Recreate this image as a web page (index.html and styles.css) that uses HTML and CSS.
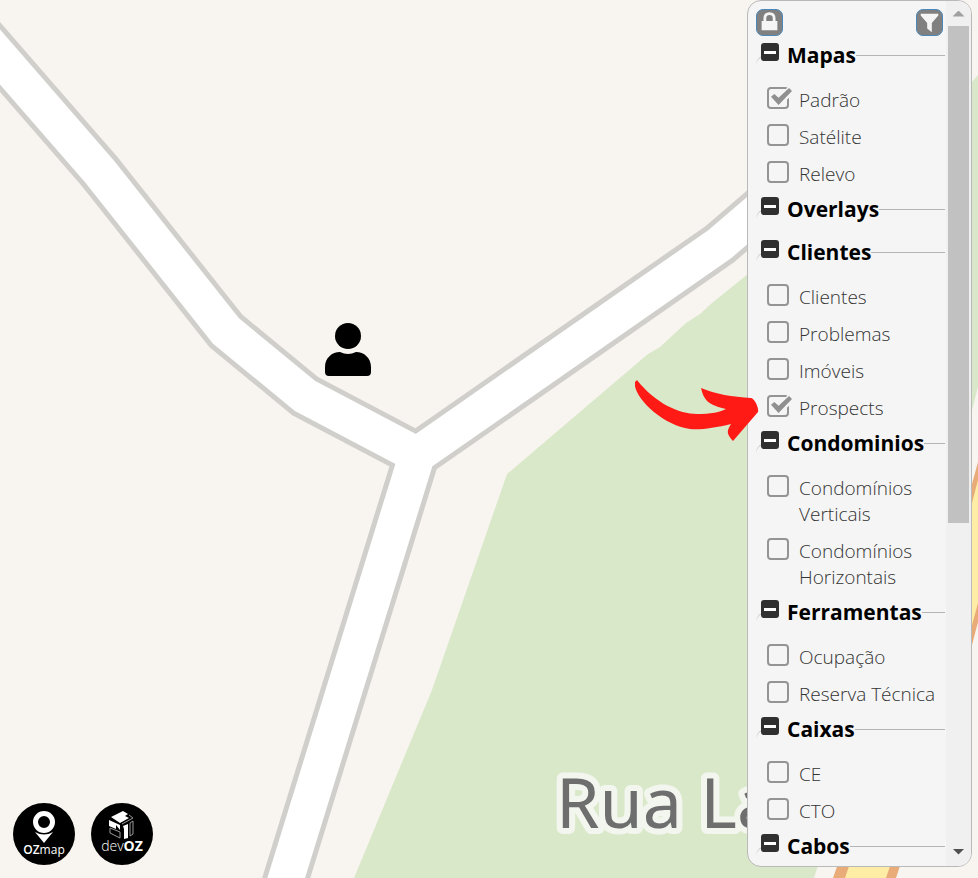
FILE: index.html
```
<!DOCTYPE html>
<html lang="pt-BR">
<head>
  <meta charset="UTF-8">
  <title>OZmap</title>
  <meta name="viewport" content="width=device-width, initial-scale=1.0" />
  <link rel="stylesheet" href="styles.css">
</head>
<body>
  <main class="map">
    <svg class="map-canvas" viewBox="0 0 978 878" preserveAspectRatio="xMaxYMin slice" aria-hidden="true">
      <rect width="978" height="878" fill="#f8f4ef" />
      <!-- park -->
      <path d="M748 274 L712 303 L700 314 L686 323 L660 347 L648 354 L507 474 L432 690 L354 878 H814 L823 850 L900 800 L960 440 L972 410 L978 387 V75 L972 82 L940 120 Z" fill="#d9e8c9" />
      <!-- main avenue -->
      <path d="M833 878 L972 484 L978 462 V622 L972 645 L896 878 Z" fill="#e9ab77" />
      <path d="M845 878 L972 503 L978 480 V603 L972 625 L886 878 Z" fill="#ffeda6" />
      <!-- streets -->
      <g fill="none" stroke-linejoin="miter">
        <path d="M-20 34 L100 172 L226 331 L305 396 L417 455 L720 244 L790 184 M417 455 L280 898" stroke="#d0cfcb" stroke-width="46" />
        <path d="M-20 34 L100 172 L226 331 L305 396 L417 455 L720 244 L790 184 M417 455 L280 898" stroke="#fff" stroke-width="36" />
      </g>
      <text class="street-name" x="556" y="828">Rua La</text>
    </svg>

    <svg class="prospect" viewBox="0 0 46 54" role="img" aria-label="Prospect">
      <circle cx="23" cy="13" r="13" />
      <path d="M0 49 V44 C0 35 7 29 15 29 Q23 33 31 29 C39 29 46 35 46 44 V49 Q46 53 42 53 H4 Q0 53 0 49 Z" />
    </svg>

    <nav class="brands">
      <a class="brand" href="#ozmap" aria-label="OZmap">
        <svg viewBox="0 0 62 62">
          <circle cx="31" cy="31" r="31" />
          <circle cx="31" cy="19" r="8.5" fill="none" stroke="#fff" stroke-width="5" />
          <path d="M22 29 Q31 34 40 29 L31 40 Z" fill="#fff" />
          <text x="31" y="51" class="brand-text"><tspan class="medium">OZ</tspan>map</text>
        </svg>
      </a>
      <a class="brand" href="#devoz" aria-label="devOZ">
        <svg viewBox="0 0 62 62">
          <circle cx="31" cy="31" r="31" />
          <path d="M20 14 L32 8 L37 11 L34 13 L38 15 L29 20 Z M18 17 L29 22 V27 L25 22 V26 L18 23 Z M32 23 L37 21 V35 L33 36 V26 Z" fill="#fff" />
          <path d="M19 25 L29 29 V35 L19 30 Z M39 20 L42 18 V31 L39 33 Z M31 21 L42 15 L38 12" fill="none" stroke="#999" />
          <text x="31" y="48" class="brand-text dev">dev<tspan class="strong">OZ</tspan></text>
        </svg>
      </a>
    </nav>

    <aside class="panel">
      <div class="panel-content" id="panelContent">
        <div class="toolbar">
          <button type="button" class="tool" aria-label="Bloquear">
            <svg viewBox="0 0 27 27"><path d="M5 12 H22 V22 H5 Z" /><path d="M8.500 13 V9 Q8.500 4 13.500 4 Q18.500 4 18.500 9 V13" fill="none" stroke="#f5f5f5" stroke-width="3" /></svg>
          </button>
          <button type="button" class="tool" aria-label="Filtrar">
            <svg viewBox="0 0 27 27"><path d="M4 4 H23 V6 L16 14 V24 L11 20 V14 L4 6 Z" /></svg>
          </button>
        </div>

        <fieldset class="group">
          <legend><button type="button" class="toggle" aria-label="Recolher"></button>Mapas</legend>
          <div class="options">
            <label><input type="checkbox" checked><span>Padrão</span></label>
            <label><input type="checkbox"><span>Satélite</span></label>
            <label><input type="checkbox"><span>Relevo</span></label>
          </div>
        </fieldset>

        <fieldset class="group">
          <legend><button type="button" class="toggle" aria-label="Recolher"></button>Overlays</legend>
        </fieldset>

        <fieldset class="group">
          <legend><button type="button" class="toggle" aria-label="Recolher"></button>Clientes</legend>
          <div class="options">
            <label><input type="checkbox"><span>Clientes</span></label>
            <label><input type="checkbox"><span>Problemas</span></label>
            <label><input type="checkbox"><span>Imóveis</span></label>
            <label><input type="checkbox" checked><span>Prospects</span></label>
          </div>
        </fieldset>

        <fieldset class="group">
          <legend><button type="button" class="toggle" aria-label="Recolher"></button>Condominios</legend>
          <div class="options">
            <label><input type="checkbox"><span>Condomínios Verticais</span></label>
            <label><input type="checkbox"><span>Condomínios Horizontais</span></label>
          </div>
        </fieldset>

        <fieldset class="group">
          <legend><button type="button" class="toggle" aria-label="Recolher"></button>Ferramentas</legend>
          <div class="options">
            <label><input type="checkbox"><span>Ocupação</span></label>
            <label><input type="checkbox"><span>Reserva Técnica</span></label>
          </div>
        </fieldset>

        <fieldset class="group">
          <legend><button type="button" class="toggle" aria-label="Recolher"></button>Caixas</legend>
          <div class="options">
            <label><input type="checkbox"><span>CE</span></label>
            <label><input type="checkbox"><span>CTO</span></label>
          </div>
        </fieldset>

        <fieldset class="group">
          <legend><button type="button" class="toggle" aria-label="Recolher"></button>Cabos</legend>
        </fieldset>
      </div>

      <div class="scrollbar">
        <button type="button" class="scroll-btn up" aria-label="Rolar para cima"></button>
        <div class="track"><div class="thumb"></div></div>
        <button type="button" class="scroll-btn down" aria-label="Rolar para baixo"></button>
      </div>
    </aside>

    <svg class="arrow" viewBox="0 0 124 62" aria-hidden="true">
      <path d="M2 0 C20 23 44 34 62 34 C75 34 86 32 91 29 C74 25 69 21 66 8 C80 14 98 17 116 18 C120 19 124 28 123 32 L98 61 C92 54 91 52 96 44 C80 48 65 50 55 49 C26 45 -3 15 0 2 Z" fill="#ff1a16" />
    </svg>
  </main>

  <script>
    document.querySelectorAll(".toggle").forEach(function (btn) {
      btn.addEventListener("click", function () {
        btn.closest(".group").classList.toggle("closed");
      });
    });

    const content = document.getElementById("panelContent");
    document.querySelector(".up").addEventListener("click", function () {
      content.scrollBy(0, -40);
    });
    document.querySelector(".down").addEventListener("click", function () {
      content.scrollBy(0, 40);
    });
  </script>
</body>
</html>
```

FILE: styles.css
```
* {
  box-sizing: border-box;
}

body {
  margin: 0;
  font-family: "Open Sans", "Noto Sans", sans-serif;
  background: #f8f4ef;
}

.map {
  position: relative;
  height: 100vh;
  overflow: hidden;
}

.map-canvas {
  display: block;
  width: 100%;
  height: 100%;
}

.street-name {
  font-family: "Noto Sans", sans-serif;
  font-size: 70px;
  fill: #6e6e6e;
  stroke: #f3f6ef;
  stroke-width: 12px;
  stroke-linejoin: round;
  paint-order: stroke;
}

.prospect {
  position: absolute;
  left: 325px;
  top: 323px;
  width: 46px;
  height: 54px;
}

.arrow {
  position: absolute;
  right: 219px;
  top: 380px;
  width: 124px;
  height: 62px;
  pointer-events: none;
}

/* logos */
.brands {
  position: absolute;
  left: 13px;
  bottom: 13px;
  display: flex;
  gap: 16px;
}

.brand svg {
  display: block;
  width: 62px;
  height: 62px;
}

.brand-text {
  font-size: 12px;
  fill: #fff;
  text-anchor: middle;
}

.brand-text.dev {
  font-size: 14px;
  font-weight: 300;
}

.brand-text .medium {
  font-weight: 600;
}

.brand-text .strong {
  font-weight: 700;
}

/* layers panel */
.panel {
  position: absolute;
  top: 0;
  right: 6px;
  bottom: 11px;
  width: 225px;
  display: flex;
  background: #f5f5f5;
  border: 1px solid #b9b9b9;
  border-radius: 14px;
  overflow: hidden;
}

.panel-content {
  flex: 1;
  overflow-y: auto;
  scrollbar-width: none;
  padding: 0 1px 0 8px;
}

.toolbar {
  display: flex;
  justify-content: space-between;
  padding: 8px 2px 1px 0;
}

.tool {
  width: 27px;
  height: 27px;
  padding: 0;
  border: 1px solid #4a87bd;
  border-radius: 7px;
  background: #808080;
  cursor: pointer;
}

.tool svg {
  display: block;
  width: 100%;
  height: 100%;
  fill: #f5f5f5;
}

.group {
  margin: 0;
  padding: 0 0 0 5px;
  border: 0;
  border-top: 1px solid #b5b5b5;
  border-radius: 10px 0 0 0;
  min-width: 0;
}

.group legend {
  display: flex;
  align-items: center;
  gap: 8px;
  padding: 0;
  margin-bottom: 7px;
  font-size: 21px;
  line-height: 36px;
  font-weight: 700;
  color: #000;
}

.toggle {
  width: 18px;
  height: 18px;
  margin-bottom: 6px;
  padding: 0 3px;
  border: 0;
  border-radius: 3px;
  background: #303030;
  cursor: pointer;
}

.toggle::before {
  content: "";
  display: block;
  height: 3px;
  background: #fff;
}

.options {
  padding-left: 6px;
}

.closed .options {
  display: none;
}

.options label {
  display: flex;
  align-items: flex-start;
  gap: 10px;
  padding: 7px 0 4px;
  font-size: 19px;
  line-height: 26px;
  font-weight: 300;
  color: #333;
  cursor: pointer;
}

.options input {
  appearance: none;
  position: relative;
  flex: none;
  width: 22px;
  height: 22px;
  margin: 0;
  border: 2px solid #949494;
  border-radius: 4px;
}

.options input:checked::before,
.options input:checked::after {
  content: "";
  position: absolute;
  left: 2px;
  top: -3px;
  width: 22px;
  height: 20px;
  background: #f5f5f5;
  clip-path: polygon(0 46%, 18% 32%, 38% 55%, 80% 0, 100% 0, 100% 42%, 38% 100%);
}

.options input:checked::after {
  top: -1px;
  width: 21px;
  height: 17px;
  background: #909090;
  clip-path: polygon(0 52%, 16% 36%, 36% 58%, 86% 0, 100% 18%, 36% 100%);
}

/* scrollbar */
.scrollbar {
  display: flex;
  flex-direction: column;
  width: 25px;
  background: #f0f0f0;
}

.scroll-btn {
  height: 25px;
  padding: 0;
  border: 0;
  background: none;
}

.scroll-btn::before {
  content: "";
  display: block;
  width: 12px;
  height: 6px;
  margin: 0 auto;
  background: #a0a0a0;
  clip-path: polygon(50% 0, 100% 100%, 0 100%);
}

.scroll-btn.down {
  padding-bottom: 4px;
}

.scroll-btn.down::before {
  background: #505050;
  clip-path: polygon(0 0, 100% 0, 50% 100%);
}

.track {
  flex: 1;
  padding: 0 2px;
}

.thumb {
  height: 61%;
  background: #c1c1c1;
}
```
